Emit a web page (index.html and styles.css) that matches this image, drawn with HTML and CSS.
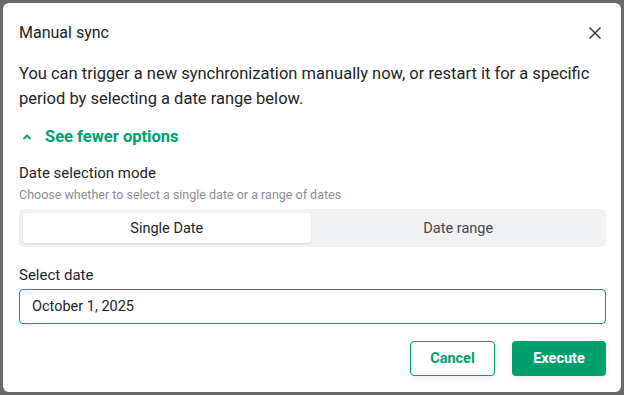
FILE: index.html
```html
<!DOCTYPE html>
<html lang="en">
<head>
    <meta charset="UTF-8">
    <title>Manual sync</title>
    <link rel="stylesheet" href="styles.css">
</head>
<body>
    <!-- Dialog -->
    <div class="dialog">
        <div class="dialog-header">
            <h2>Manual sync</h2>
            <button class="close" type="button" aria-label="Close">
                <svg width="14" height="14" viewBox="0 0 14 14"><path d="M1.5 1.5l11 11M12.5 1.5l-11 11" stroke="#3a3d42" stroke-width="1.5" fill="none"/></svg>
            </button>
        </div>

        <p class="intro">You can trigger a new synchronization manually now, or restart it for a specific period by selecting a date range below.</p>

        <a class="toggle" href="#">
            <svg width="12" height="8" viewBox="0 0 12 8"><path d="M2.5 6l3.5-3.5 3.5 3.5" stroke="#0a9c6c" stroke-width="1.8" fill="none"/></svg>
            See fewer options
        </a>

        <div class="field">
            <label>Date selection mode</label>
            <span class="hint">Choose whether to select a single date or a range of dates</span>
            <div class="segmented">
                <button type="button" class="seg active">Single Date</button>
                <button type="button" class="seg">Date range</button>
            </div>
        </div>

        <div class="field date-field">
            <label for="date">Select date</label>
            <input type="text" id="date" value="October 1, 2025">
        </div>

        <div class="actions">
            <button type="button" class="btn btn-outline">Cancel</button>
            <button type="button" class="btn btn-primary">Execute</button>
        </div>
    </div>
</body>
</html>
```

FILE: styles.css
```css
:root {
    --green: #00a06d;
    --text: #222428;
    --muted: #8a8d93;
    --seg-bg: #f0f1f3;
    --font: 'Roboto', sans-serif;
}

* {
    box-sizing: border-box;
    margin: 0;
    padding: 0;
    font-family: var(--font);
}

body {
    background: #6a6a6a;
    padding: 3px;
    height: 395px;
    overflow: hidden;
}

/* Dialog box */
.dialog {
    background: #fff;
    border-radius: 6px;
    height: 389px;
    padding: 0 15px 0 16px;
    color: var(--text);
}

.dialog-header {
    display: flex;
    justify-content: space-between;
    align-items: center;
    height: 58px;
    padding-top: 1px;
}

.dialog-header h2 {
    font-size: 16px;
    font-weight: 400;
}

.close {
    border: none;
    background: none;
    width: 20px;
    height: 20px;
    display: flex;
    align-items: center;
    justify-content: center;
    margin-right: 1px;
}

.intro {
    font-size: 16.5px;
    line-height: 25px;
}

.toggle {
    display: flex;
    align-items: center;
    gap: 12px;
    margin-top: 16px;
    padding-left: 2px;
    color: var(--green);
    font-weight: 700;
    font-size: 16.5px;
    text-decoration: none;
}

/* Fields */
.field {
    display: flex;
    flex-direction: column;
    margin-top: 17px;
}

.field label {
    font-size: 15px;
    line-height: 20px;
}

.hint {
    font-size: 12.5px;
    line-height: 16px;
    color: var(--muted);
    margin-top: 4px;
}

.segmented {
    display: flex;
    gap: 4px;
    margin-top: 6px;
    height: 38px;
    padding: 4px;
    background: var(--seg-bg);
    border-radius: 4px;
}

.seg {
    flex: 1;
    border: none;
    background: none;
    border-radius: 4px;
    font-size: 14.5px;
    color: #44474c;
}

.seg.active {
    background: #fff;
    color: var(--text);
    box-shadow: 0 1px 2px rgba(0, 0, 0, 0.12);
}

.date-field {
    margin-top: 18px;
}

.date-field input {
    margin-top: 4px;
    height: 35px;
    border: 1px solid var(--green);
    border-radius: 4px;
    padding: 0 12px;
    font-size: 14.5px;
    color: var(--text);
    outline: none;
}

/* Footer buttons */
.actions {
    display: flex;
    justify-content: flex-end;
    gap: 17px;
    margin-top: 17px;
}

.btn {
    height: 35px;
    border-radius: 4px;
    font-size: 14.5px;
    font-weight: 700;
    box-shadow: 0 2px 6px rgba(0, 0, 0, 0.08);
}

.btn-outline {
    width: 85px;
    background: #fff;
    border: 1px solid var(--green);
    color: var(--green);
}

.btn-primary {
    width: 94px;
    background: var(--green);
    border: none;
    color: #fff;
}
```
